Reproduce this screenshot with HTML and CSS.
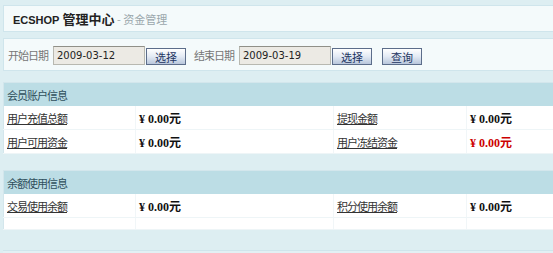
FILE: index.html
```html
<!DOCTYPE html>
<html lang="zh-CN">
<head>
    <meta charset="UTF-8">
    <title>ECSHOP 管理中心 - 资金管理</title>
    <link rel="stylesheet" href="styles.css">
</head>
<body>
    <div class="page">
        <h1 class="title"><span class="brand">ECSHOP</span> 管理中心<span class="sub"> - 资金管理</span></h1>

        <form class="search-box">
            <label>开始日期</label>
            <input type="text" class="date-input" value="2009-03-12">
            <button type="button" class="btn">选择</button>
            <label class="end-label">结束日期</label>
            <input type="text" class="date-input" value="2009-03-19">
            <button type="button" class="btn">选择</button>
            <button type="button" class="btn btn-query">查询</button>
        </form>

        <!-- 会员账户信息 -->
        <table class="list-table">
            <tr><th colspan="4">会员账户信息</th></tr>
            <tr>
                <td class="c1"><a href="#">用户充值总额</a></td>
                <td class="c2 money">¥ 0.00元</td>
                <td class="c3"><a href="#">提现金额</a></td>
                <td class="c4 money">¥ 0.00元</td>
            </tr>
            <tr>
                <td class="c1"><a href="#">用户可用资金</a></td>
                <td class="c2 money">¥ 0.00元</td>
                <td class="c3"><a href="#">用户冻结资金</a></td>
                <td class="c4 money red">¥ 0.00元</td>
            </tr>
        </table>

        <!-- 余额使用信息 -->
        <table class="list-table">
            <tr><th colspan="4">余额使用信息</th></tr>
            <tr>
                <td class="c1"><a href="#">交易使用余额</a></td>
                <td class="c2 money">¥ 0.00元</td>
                <td class="c3"><a href="#">积分使用余额</a></td>
                <td class="c4 money">¥ 0.00元</td>
            </tr>
            <tr class="empty-row"><td></td><td></td><td></td><td></td></tr>
        </table>

        <div class="footer-box"></div>
    </div>
</body>
</html>
```

FILE: styles.css
```css
html, body {
    margin: 0;
    padding: 0;
    overflow: hidden;
}

body {
    background-color: #DDEEF2;
    font-family: "Noto Sans CJK SC", sans-serif;
    font-size: 11px;
    letter-spacing: -1px;
    color: #333;
}

.page {
    width: 640px;
    padding: 5px 0 0 3px;
}

.title {
    margin: 0;
    height: 25px;
    line-height: 25px;
    padding-left: 9px;
    background: #F4FAFB;
    border: 1px solid #CFE5EC;
    font-family: "Noto Sans CJK SC", sans-serif;
    font-size: 13px;
    letter-spacing: 0;
    font-weight: bold;
    color: #222;
}

.title .brand {
    font-family: "Liberation Sans", sans-serif;
    font-size: 11px;
}

.title .sub {
    font-weight: normal;
    font-size: 11px;
    color: #9AA7AC;
}

.search-box {
    display: flex;
    align-items: center;
    margin: 6px 0 0 0;
    height: 31px;
    padding-left: 4px;
    background: #F4FAFB;
    border: 1px solid #CFE5EC;
    color: #777;
}

.search-box label {
    width: 40px;
    margin-right: 5px;
}

.search-box .end-label {
    margin-left: 8px;
}

.date-input {
    box-sizing: border-box;
    width: 92px;
    height: 19px;
    margin: 2px 1px 0 0;
    padding: 0 3px;
    border: 1px solid #B8B8B0;
    border-top-color: #909088;
    background: #ECEAE4;
    font-family: "DejaVu Sans", sans-serif;
    font-size: 10px;
    letter-spacing: 0;
    color: #222;
}

.btn {
    box-sizing: border-box;
    width: 40px;
    height: 17px;
    margin-top: 4px;
    padding: 0;
    border: 1px solid #5C6D8A;
    background: linear-gradient(#FFFFFF, #E3EAF4 50%, #B9C7DC);
    font-family: "Noto Sans CJK SC", sans-serif;
    font-size: 11px;
    line-height: 14px;
    color: #1E3562;
}

.btn-query {
    margin-left: 10px;
}

.list-table {
    width: 100%;
    margin-top: 11px;
    border-collapse: collapse;
    background: #FFFFFF;
    border: 1px solid #D3E6EC;
}

.list-table + .list-table {
    margin-top: 16px;
}

.list-table th {
    height: 23px;
    padding: 0 0 0 3px;
    background: #BCDDE5;
    text-align: left;
    font-weight: normal;
    color: #2F4F5C;
}

.list-table td {
    height: 23px;
    padding: 0 0 0 3px;
    border-bottom: 1px solid #EEF5F7;
    border-right: 1px solid #F1F6F8;
}

.list-table .empty-row td {
    height: 11px;
}

.list-table a {
    color: #333;
}

.c1 { width: 128px; }
.c2 { width: 194px; }
.c3 { width: 129px; }

.money {
    font-family: "Liberation Serif", "Noto Sans CJK SC", serif;
    font-weight: bold;
    font-size: 12px;
    letter-spacing: 0;
    color: #111;
}

.money.red {
    color: #CC0000;
}

.footer-box {
    height: 20px;
    margin-top: 20px;
    background: #E2F0F4;
    border-top: 1px solid #CFE5EC;
}
```
